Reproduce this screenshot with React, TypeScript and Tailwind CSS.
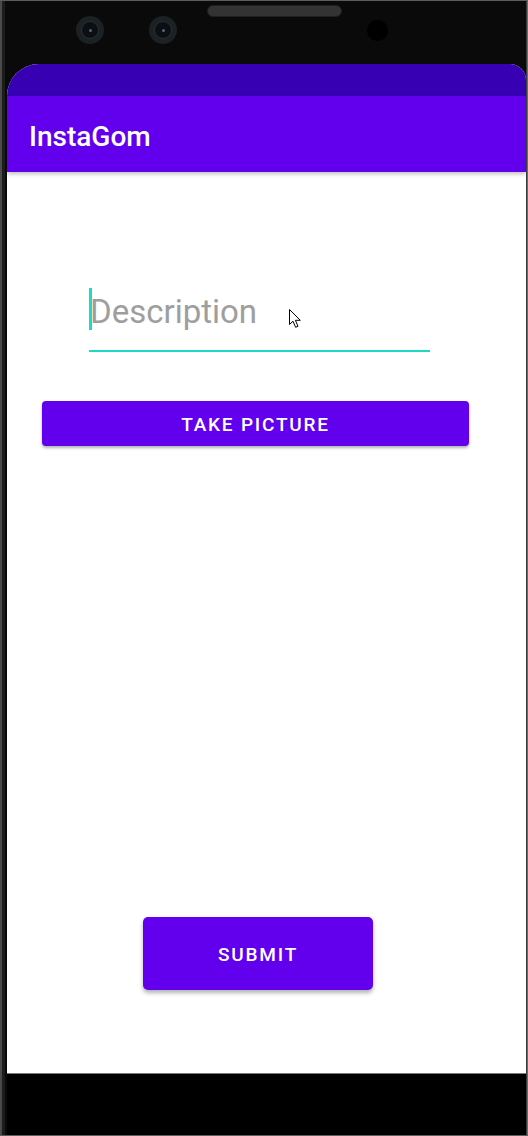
import React from "react";

function Lens() {
  return (
    <div className="w-[28px] h-[28px] rounded-full bg-[#1c2124] flex items-center justify-center">
      <div className="w-[18px] h-[18px] rounded-full bg-[#0b0f14] border border-[#2a3036] flex items-center justify-center">
        <div className="w-[3px] h-[3px] rounded-full bg-[#5a6470]" />
      </div>
    </div>
  );
}

function Pointer() {
  return (
    <svg width="13" height="20" viewBox="0 0 13 20" className="block">
      <path
        d="M0.5 0.5 L0.5 15.5 L4 12.2 L6.6 18.3 L9 17.3 L6.4 11.3 L11.3 11.3 Z"
        fill="#ffffff"
        stroke="#000000"
        strokeWidth="1"
        strokeLinejoin="miter"
      />
    </svg>
  );
}

export default function App() {
  return (
    <div
      className="w-[528px] h-[1136px] bg-[#0a0a0a] flex flex-col border-t border-[#5c5c5c] overflow-hidden"
      style={{ fontFamily: "Roboto, 'Noto Sans', sans-serif" }}
    >
      <div className="flex-1 flex flex-row">
        {/* left bezel edge */}
        <div className="w-[7px] flex flex-row">
          <div className="w-[2px] bg-[#4a4a4a]" />
          <div className="w-[3px] bg-[#1c1c1c]" />
          <div className="w-[2px] bg-[#0a0a0a]" />
        </div>
        {/* center */}
        <div className="flex-1 flex flex-col">
          {/* top bezel */}
          <div className="h-[63px] relative">
            <div className="flex flex-row items-center pt-[15px] pl-[69px]">
              <Lens />
              <div className="ml-[45px]">
                <Lens />
              </div>
              <div className="ml-[190px] w-[21px] h-[21px] rounded-full bg-black" />
            </div>
            <div className="absolute left-[200px] top-[4px] w-[135px] h-[12px] rounded-[6px] bg-[#2b2b2b] border border-[#1f1f1f]"
              style={{ backgroundImage: "radial-gradient(#3d3d3d 0.6px, transparent 0.8px)", backgroundSize: "2px 2px" }}
            />
          </div>
          {/* screen */}
          <div className="h-[1009px] flex flex-col rounded-tl-[32px] rounded-tr-[16px] overflow-hidden bg-white">
            <div className="h-[32px] bg-[#3700B3]" />
            <div className="h-[76px] bg-[#6200EE] pl-[22px] pt-[25px] shadow-[0_2px_4px_rgba(0,0,0,0.25)] relative z-10">
              <div className="text-white text-[28px] leading-[32px] font-medium">InstaGom</div>
            </div>
            <div className="flex-1 flex flex-col bg-white">
              <div className="mt-[116px] ml-[82px] w-[341px] flex flex-col">
                <div className="h-[42px] flex flex-row relative">
                  <div className="w-[3px] h-[42px] bg-[#1ed9c6]" />
                  <div className="text-[33px] leading-[42px] pt-[3px] text-[#9e9e9e] -ml-[2px]">Description</div>
                  <div className="absolute left-[200px] top-[21px]">
                    <Pointer />
                  </div>
                </div>
                <div className="mt-[20px] h-[2px] bg-[#1ed9c6]" />
              </div>
              <div className="mt-[49px] ml-[35px] w-[427px] h-[45px] pt-[3px] rounded-[4px] bg-[#6200EE] shadow-[0_2px_3px_rgba(0,0,0,0.3)] flex items-center justify-center">
                <span className="text-white text-[19px] font-medium tracking-[1.8px]">TAKE PICTURE</span>
              </div>
              <div className="mt-[471px] ml-[136px] w-[230px] h-[73px] pt-[3px] rounded-[5px] bg-[#6200EE] shadow-[0_3px_4px_rgba(0,0,0,0.3)] flex items-center justify-center">
                <span className="text-white text-[19px] font-medium tracking-[1.8px]">SUBMIT</span>
              </div>
            </div>
          </div>
          <div className="h-[1px] bg-[#7a7a7a]" />
          <div className="flex-1 bg-black" />
        </div>
        {/* right edge */}
        <div className="w-[2px] flex flex-row">
          <div className="w-[1px] bg-[#3a3a3a]" />
          <div className="w-[1px] bg-[#6a6a6a]" />
        </div>
      </div>
      <div className="h-[1px] bg-[#5c5c5c]" />
    </div>
  );
}
